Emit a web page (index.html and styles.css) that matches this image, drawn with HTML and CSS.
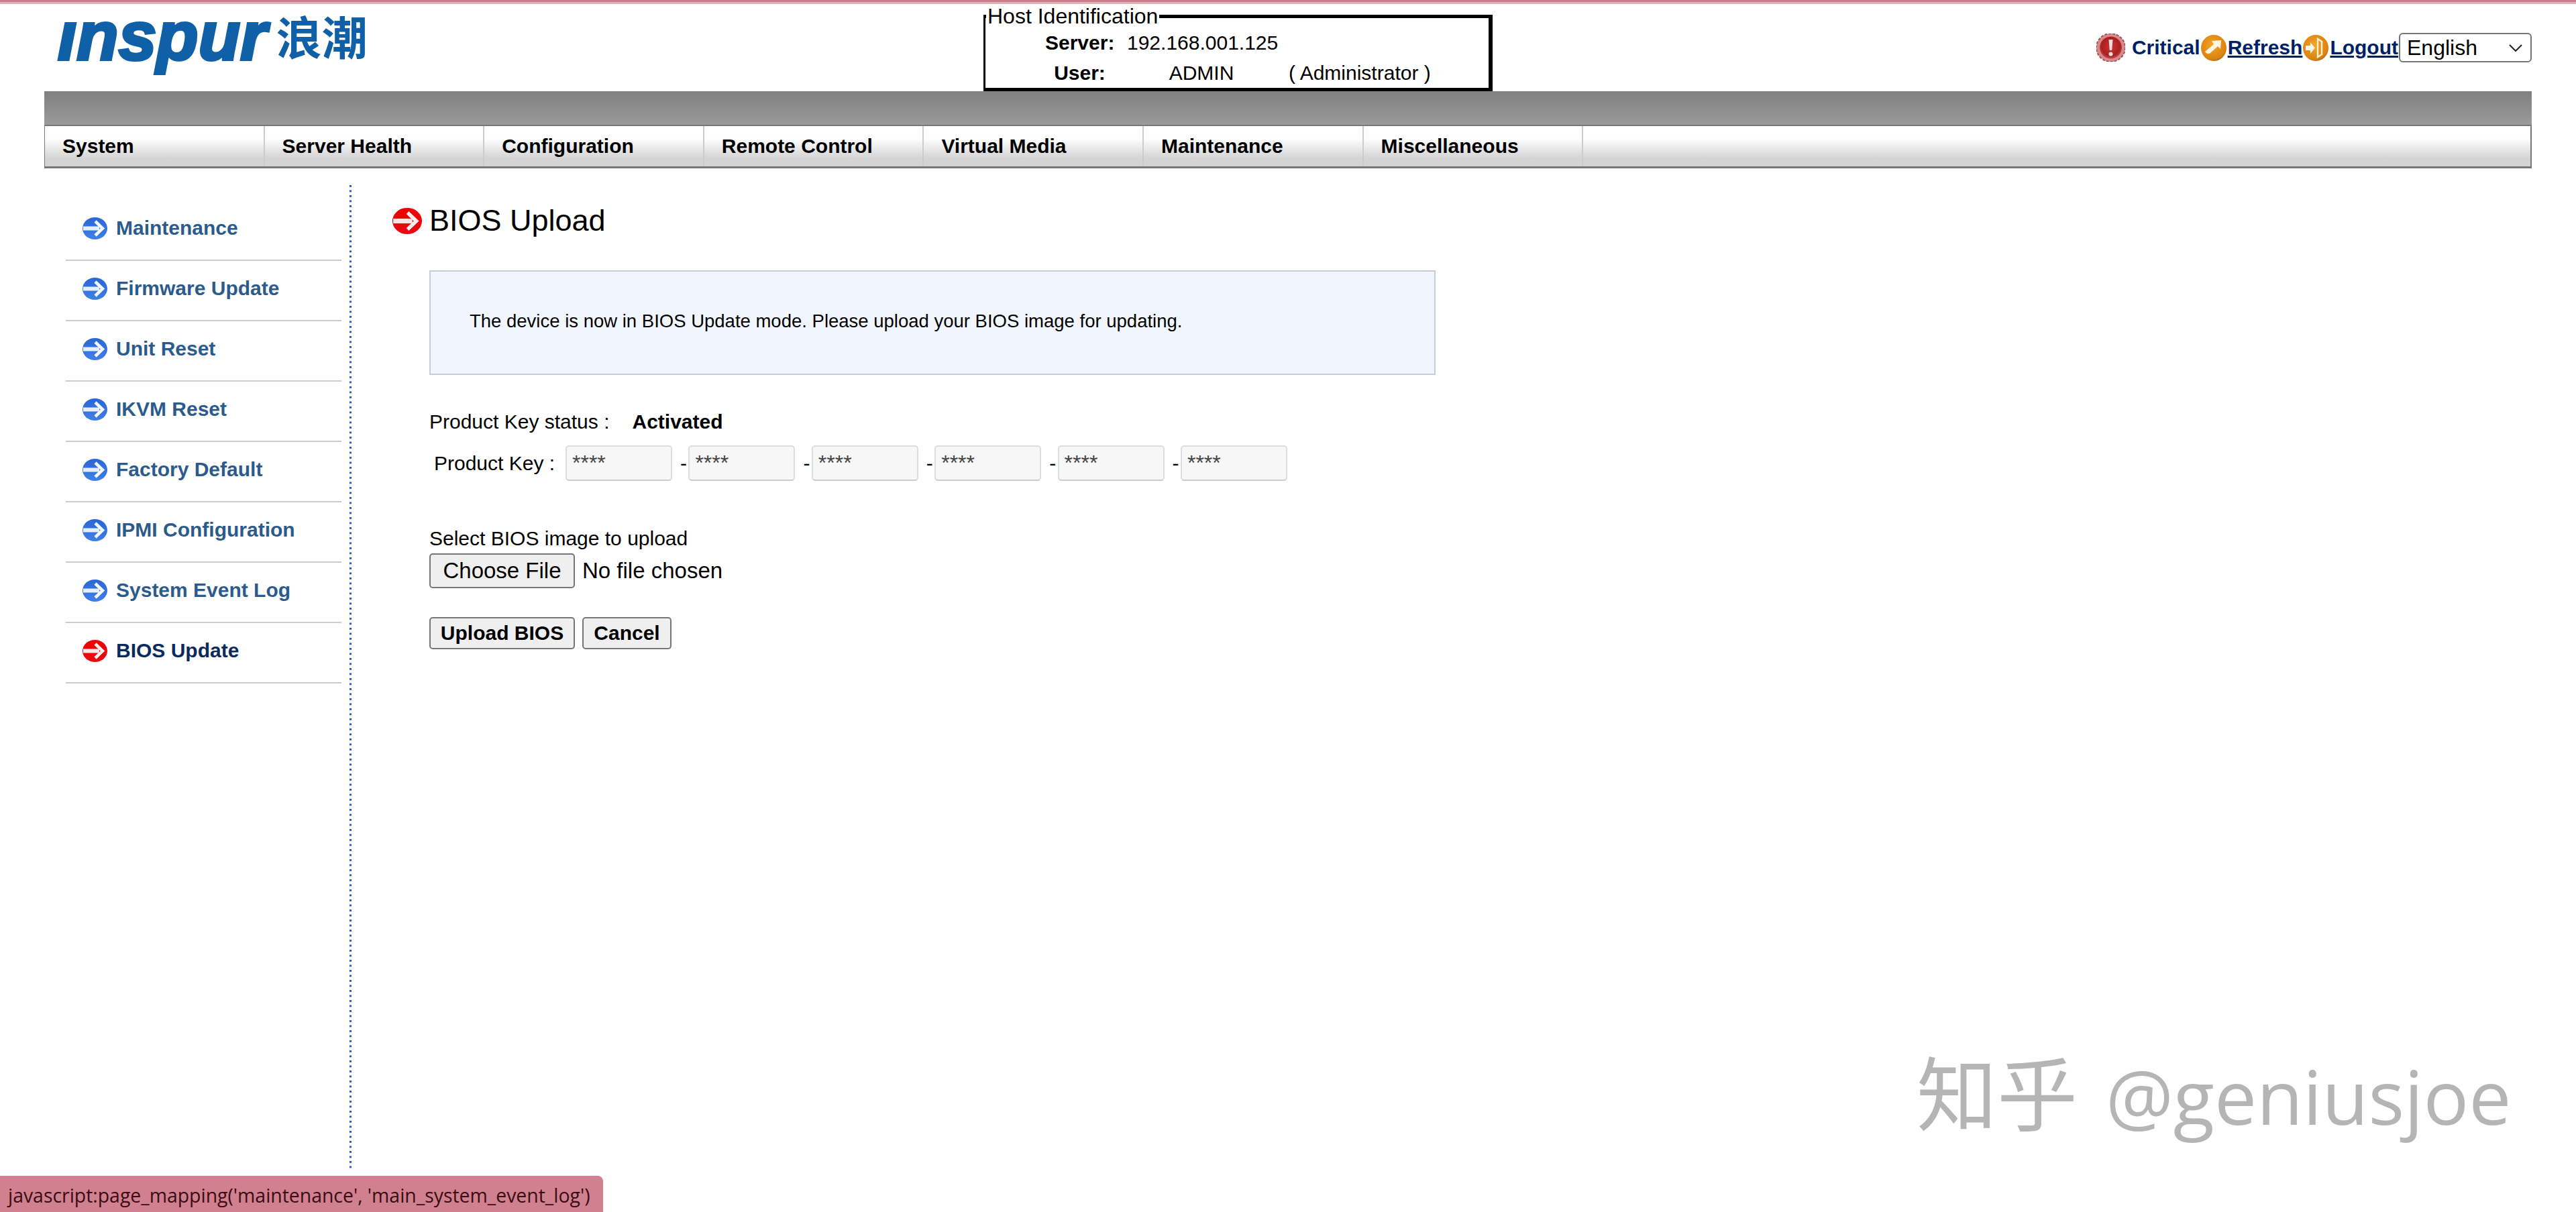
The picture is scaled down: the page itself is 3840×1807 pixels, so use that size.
FILE: index.html
```html
<!DOCTYPE html>
<html lang="en">
<head>
<meta charset="utf-8">
<title>BIOS Upload</title>
<link rel="stylesheet" href="styles.css">
</head>
<body>
<svg class="defs" width="0" height="0" aria-hidden="true">
  <defs>
    <linearGradient id="gBlue" x1="0" y1="0" x2="0" y2="1"><stop offset="0" stop-color="#2a66d6"/><stop offset="1" stop-color="#3f80e6"/></linearGradient>
    <linearGradient id="gRed" x1="0" y1="0" x2="0" y2="1"><stop offset="0" stop-color="#f00000"/><stop offset="1" stop-color="#e80a14"/></linearGradient>
    <radialGradient id="gOrange" cx="0.45" cy="0.4" r="0.7"><stop offset="0" stop-color="#f4a42a"/><stop offset="0.75" stop-color="#dc8210"/><stop offset="1" stop-color="#7a5a30"/></radialGradient>
    <radialGradient id="gCrit" cx="0.5" cy="0.45" r="0.6"><stop offset="0" stop-color="#d03030"/><stop offset="0.7" stop-color="#a82020"/><stop offset="1" stop-color="#c86060"/></radialGradient>
    <symbol id="arrowBlue" viewBox="0 0 37 33">
      <ellipse cx="18.5" cy="16.5" rx="18.5" ry="16.5" fill="url(#gBlue)"/>
      <path d="M1 13.5H25V19.5H1Z" fill="#e4eefc"/>
      <path d="M19 6L30 16.5L19 27" fill="none" stroke="#f4f8ff" stroke-width="4.5"/>
    </symbol>
    <symbol id="arrowRed" viewBox="0 0 37 33">
      <ellipse cx="18.5" cy="16.5" rx="18.5" ry="16.5" fill="url(#gRed)"/>
      <path d="M1 13.5H25V19.5H1Z" fill="#fbe4e6"/>
      <path d="M19 6L30 16.5L19 27" fill="none" stroke="#fff0f0" stroke-width="4.5"/>
    </symbol>
  </defs>
</svg>

<header class="top">
  <div class="logo"><span class="logo-en">inspur</span><span class="logo-cn">浪潮</span></div>
  <fieldset class="host">
    <legend>Host Identification</legend>
    <div class="host-grid">
      <b>Server:</b><span>192.168.001.125</span><span></span>
      <b>User:</b><span>ADMIN</span><span class="role">( Administrator )</span>
    </div>
  </fieldset>
  <div class="actions">
    <svg class="ico-crit" viewBox="0 0 43 42"><ellipse cx="21.5" cy="21" rx="21.5" ry="21" fill="#d88a8a" stroke="#a85050" stroke-width="2" stroke-dasharray="4 2"/><ellipse cx="21.5" cy="21" rx="16.5" ry="16.5" fill="url(#gCrit)"/><path d="M18.5 9H24.5L23.2 25H19.8Z" fill="#f6dcdc"/><circle cx="21.5" cy="30.500" r="3" fill="#f6dcdc"/></svg>
    <span class="act">Critical</span>
    <svg class="ico-act" viewBox="0 0 38 39"><ellipse cx="19" cy="19.500" rx="19" ry="19.500" fill="url(#gOrange)"/><path d="M16 9L30 8L29 21L25 17L14 27C11 29 8 28 6 25L19 14Z" fill="#fff6e4"/></svg>
    <a class="act" href="#">Refresh</a>
    <svg class="ico-act" viewBox="0 0 38 39"><ellipse cx="19" cy="19.500" rx="19" ry="19.500" fill="url(#gOrange)"/><path d="M4 16H11V11L18 19.500L11 28V23H4Z" fill="#fff6e4"/><path d="M22 6L28 10V29L22 33Z" fill="none" stroke="#fff0d0" stroke-width="2.500"/></svg>
    <a class="act" href="#">Logout</a>
    <select class="lang"><option>English</option></select>
  </div>
</header>

<nav class="nav">
  <div class="band"></div>
  <ul class="menu">
    <li>System</li><li>Server Health</li><li>Configuration</li><li>Remote Control</li><li>Virtual Media</li><li>Maintenance</li><li>Miscellaneous</li>
  </ul>
</nav>

<div class="main">
  <aside class="side">
    <ul>
      <li><svg class="side-ico"><use href="#arrowBlue"/></svg>Maintenance</li>
      <li><svg class="side-ico"><use href="#arrowBlue"/></svg>Firmware Update</li>
      <li><svg class="side-ico"><use href="#arrowBlue"/></svg>Unit Reset</li>
      <li><svg class="side-ico"><use href="#arrowBlue"/></svg>IKVM Reset</li>
      <li><svg class="side-ico"><use href="#arrowBlue"/></svg>Factory Default</li>
      <li><svg class="side-ico"><use href="#arrowBlue"/></svg>IPMI Configuration</li>
      <li><svg class="side-ico"><use href="#arrowBlue"/></svg>System Event Log</li>
      <li class="active"><svg class="side-ico"><use href="#arrowRed"/></svg>BIOS Update</li>
    </ul>
  </aside>
  <main class="content">
    <h1 class="title"><svg class="title-ico"><use href="#arrowRed"/></svg>BIOS Upload</h1>
    <section class="body">
      <div class="info">The device is now in BIOS Update mode. Please upload your BIOS image for updating.</div>
      <div class="status"><span>Product Key status :</span><b>Activated</b></div>
      <div class="keys">
        <label>Product Key :</label>
        <input class="key" value="****" readonly><span class="dash">-</span>
        <input class="key" value="****" readonly><span class="dash">-</span>
        <input class="key" value="****" readonly><span class="dash">-</span>
        <input class="key" value="****" readonly><span class="dash">-</span>
        <input class="key" value="****" readonly><span class="dash">-</span>
        <input class="key" value="****" readonly>
      </div>
      <div class="select-label">Select BIOS image to upload</div>
      <div class="file"><button class="btn choose" type="button">Choose File</button><span>No file chosen</span></div>
      <div class="buttons"><button class="btn strong upload" type="button">Upload BIOS</button><button class="btn strong cancel" type="button">Cancel</button></div>
    </section>
  </main>
</div>

<div class="watermark"><span class="wm-cn">知乎</span><span class="wm-en">@geniusjoe</span></div>
<div class="statusbar">javascript:page_mapping('maintenance', 'main_system_event_log')</div>
</body>
</html>
```

FILE: styles.css
```css
* { box-sizing: border-box; }
html, body { margin: 0; padding: 0; }
body {
  width: 3840px;
  height: 1807px;
  position: relative;
  overflow: hidden;
  background: #fff;
  border-top: 3px solid #c97d89;
  font-family: "Liberation Sans", Arial, sans-serif;
  font-size: 30px;
  color: #000;
}
body::before {
  content: "";
  display: block;
  height: 3px;
  background: #dfaeb6;
}
ul { list-style: none; margin: 0; padding: 0; }
.defs { position: absolute; }

/* header */
.top {
  height: 130px;
  display: grid;
  grid-template-columns: 1400px 759px 1fr;
  padding: 0 66px;
}
.logo {
  color: #1060a8;
  display: flex;
  align-items: flex-start;
  padding-left: 20px;
}
.logo-en {
  font-size: 102px;
  line-height: 120px;
  font-weight: 700;
  font-style: italic;
  -webkit-text-stroke: 4px #1060a8;
  clip-path: inset(37px -20px -20px -20px);
  margin-top: -12px;
}
.logo-cn {
  font-family: "Noto Sans CJK SC", sans-serif;
  font-size: 68px;
  line-height: 80px;
  font-weight: 700;
  margin: 7px 0 0 14px;
}
.host {
  margin: 0;
  padding: 0 0 0 89px;
  height: 130px;
  border-style: solid;
  border-color: #000;
  border-width: 5px 6px 5px 3px;
}
.host legend {
  padding: 0 2px;
  margin-left: -88px;
  font-size: 32px;
  line-height: 37px;
}
.host-grid {
  display: grid;
  grid-template-columns: 103px 222px auto;
  column-gap: 19px;
  row-gap: 5px;
  grid-auto-rows: 40px;
  align-items: center;
  text-align: center;
  white-space: nowrap;
  padding-top: 1px;
}
.role { text-align: left; }
.actions {
  display: flex;
  justify-content: flex-end;
  align-items: center;
  color: #001f6a;
  font-weight: 700;
}
.ico-crit { width: 43px; height: 42px; margin-right: 10px; }
.ico-act { width: 38px; height: 39px; margin: 0 2px 0 1px; }
.act { color: #001f6a; }
.lang {
  appearance: none;
  width: 198px;
  height: 44px;
  margin-left: 1px;
  padding: 0 0 0 10px;
  border: 2px solid #767676;
  border-radius: 6px;
  font-family: "Liberation Sans", Arial, sans-serif;
  font-size: 32px;
  color: #000;
  background: #fff url("data:image/svg+xml,%3Csvg xmlns='http://www.w3.org/2000/svg' width='20' height='11'%3E%3Cpath d='M1 1L10 10L19 1' fill='none' stroke='%23222' stroke-width='2'/%3E%3C/svg%3E") no-repeat right 12px center;
}

/* nav */
.nav { margin: 0 66px; }
.band { height: 50px; background: linear-gradient(#808080, #9a9a9a); }
.menu {
  display: flex;
  height: 65px;
  border-style: solid;
  border-color: #777;
  border-width: 2px 2px 3px 1px;
  background: linear-gradient(#fff 30%, #d4d4d4 80%);
  font-weight: 700;
}
.menu li {
  width: 327.6px;
  padding-left: 26px;
  border-right: 2px solid #ccc;
  line-height: 60px;
}

/* layout */
.main {
  display: flex;
  margin-top: 25px;
  height: 1470px;
}
.side {
  width: 524px;
  padding: 23px 15px 0 98px;
  background: linear-gradient(#2f4fd6 40%, transparent 40%) right top / 3px 7.5px repeat-y;
  font-weight: 700;
  color: #2b5b8c;
}
.side li {
  height: 90px;
  display: flex;
  align-items: center;
  padding: 1px 0 7px 25px;
  border-bottom: 2px solid #ccc;
}
.side li.active { color: #0a2a5e; }
.side-ico { width: 37px; height: 33px; margin-right: 13px; flex: none; }
.content { padding: 31px 0 0 61px; flex: 1; }
.title {
  margin: 0;
  display: flex;
  align-items: center;
  height: 44px;
  font-size: 45px;
  font-weight: 400;
}
.title-ico { width: 44px; height: 43px; margin-right: 11px; flex: none; }
.body { padding-left: 55px; }
.info {
  width: 1500px;
  height: 156px;
  margin-top: 52px;
  padding: 0 0 4px 58px;
  display: flex;
  align-items: center;
  background: #f1f6fe;
  border: 2px solid #c5ced8;
  font-size: 27.5px;
}
.status {
  display: flex;
  gap: 34px;
  height: 36px;
  line-height: 36px;
  margin-top: 52px;
}
.keys {
  display: flex;
  align-items: center;
  height: 53px;
  margin-top: 17px;
  padding-left: 7px;
}
.keys label { width: 196px; }
.key {
  width: 159px;
  height: 53px;
  padding: 0 0 0 8px;
  background: #f7f7f7;
  border: 2px solid #ddd;
  border-bottom-color: #ccc;
  border-radius: 5px;
  font-family: "Liberation Sans", Arial, sans-serif;
  font-size: 32px;
  color: #444;
}
.dash { width: 24.4px; padding-left: 12px; }
.select-label { height: 36px; line-height: 36px; margin-top: 68px; }
.file {
  display: flex;
  align-items: center;
  gap: 11px;
  margin-top: 4px;
  font-size: 33px;
}
.btn {
  height: 52px;
  padding: 0;
  background: #efefef;
  border: 2px solid #767676;
  border-radius: 5px;
  font-family: "Liberation Sans", Arial, sans-serif;
  color: #000;
}
.choose { width: 217px; font-size: 33px; }
.buttons { display: flex; gap: 11px; margin-top: 43px; }
.strong { height: 48px; font-size: 30px; font-weight: 700; }
.upload { width: 217px; }
.cancel { width: 133px; }

/* overlays */
.watermark {
  position: absolute;
  left: 2857px;
  top: 1535px;
  display: flex;
  align-items: baseline;
  gap: 42px;
  color: #b5b5b5;
  white-space: nowrap;
}
.wm-cn { font-family: "Noto Sans CJK SC", sans-serif; font-size: 120px; font-weight: 400; }
.wm-en { font-family: "Open Sans", sans-serif; font-size: 112.5px; font-weight: 500; }
.statusbar {
  position: absolute;
  left: 0;
  bottom: 0;
  width: 899px;
  height: 54px;
  padding-left: 12px;
  line-height: 58px;
  background: #d0808e;
  border-top-right-radius: 8px;
  font-family: "Open Sans", sans-serif;
  font-size: 28.4px;
  color: #3a0c14;
  white-space: nowrap;
}
```
